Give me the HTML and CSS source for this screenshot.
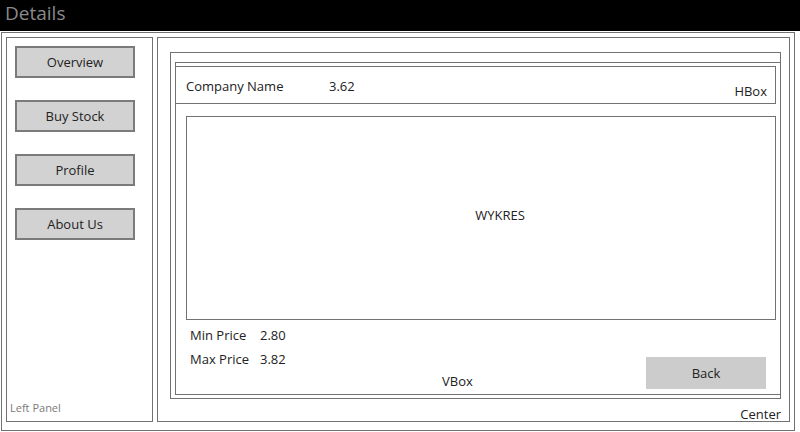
FILE: index.html
```html
<!DOCTYPE html>
<html lang="en">
<head>
<meta charset="utf-8">
<title>Details</title>
<link rel="stylesheet" href="styles.css">
</head>
<body>
<div class="titlebar">Details</div>
<div class="frame">
  <aside class="left-panel">
    <nav class="nav">
      <button class="nav-btn">Overview</button>
      <button class="nav-btn">Buy Stock</button>
      <button class="nav-btn">Profile</button>
      <button class="nav-btn">About Us</button>
    </nav>
    <span class="panel-label">Left Panel</span>
  </aside>
  <main class="center">
    <section class="box-a">
      <div class="vbox">
        <div class="hbox">
          <div class="hbox-row"><span class="company">Company Name</span><span>3.62</span></div>
          <span class="hbox-label">HBox</span>
        </div>
        <div class="chart"><span>WYKRES</span></div>
        <div class="bottom">
          <div class="prices">
            <div class="price-row"><span class="price-name">Min Price</span><span>2.80</span></div>
            <div class="price-row"><span class="price-name">Max Price</span><span>3.82</span></div>
          </div>
          <span class="vbox-label">VBox</span>
          <button class="back-btn">Back</button>
        </div>
      </div>
    </section>
    <span class="center-label">Center</span>
  </main>
</div>
</body>
</html>
```
FILE: styles.css
```css
* { box-sizing: border-box; }

body {
  margin: 0;
  width: 800px;
  height: 432px;
  overflow: hidden;
  background: #fff;
  color: #222;
  font-family: "Open Sans", "Noto Sans", sans-serif;
  font-size: 13px;
  line-height: 18px;
}

.titlebar {
  height: 31px;
  background: #000;
  color: #8a8a8a;
  font-size: 19px;
  line-height: 27px;
  padding-left: 5px;
}

.frame {
  margin: 1px 0 0 1px;
  width: 794px;
  height: 399px;
  border: 1px solid #727272;
  padding: 4px 4px 8px 4px;
  display: flex;
  gap: 4px;
}

.left-panel {
  width: 147px;
  border: 1px solid #727272;
  display: grid;
}
.left-panel > * { grid-area: 1 / 1; }

.nav {
  display: flex;
  flex-direction: column;
  align-items: flex-start;
  gap: 22px;
  padding: 8px;
}

.nav-btn {
  width: 120px;
  height: 32px;
  padding: 0;
  border: 2px solid #7b7b7b;
  background: #d2d2d2;
  color: #222;
  font: inherit;
}

.panel-label {
  justify-self: start;
  align-self: end;
  font-size: 11px;
  line-height: 14px;
  color: #7a7a7a;
  padding: 0 0 6px 3px;
}

.center {
  flex: 1;
  border: 1px solid #727272;
  display: grid;
}
.center > * { grid-area: 1 / 1; }

.box-a {
  margin: 14px 8px 22px 12px;
  border: 1px solid #727272;
  display: flex;
  flex-direction: column;
}

.vbox {
  flex: 1;
  margin: 9px -1px 3px 4px;
  border: 1px solid #727272;
  display: flex;
  flex-direction: column;
}

.hbox {
  margin: 3px 4px 0 -1px;
  height: 38px;
  border: 1px solid #727272;
  display: grid;
}
.hbox > * { grid-area: 1 / 1; }

.hbox-row {
  align-self: start;
  display: flex;
  padding: 10px 0 0 10px;
}

.company { width: 143px; }

.hbox-label {
  justify-self: end;
  align-self: end;
  padding: 0 8px 3px 0;
}

.chart {
  margin: 12px 4px 0 10px;
  height: 204px;
  border: 1px solid #727272;
  display: flex;
  align-items: center;
  justify-content: center;
  padding: 0 0 6px 38px;
}

.bottom {
  flex: 1;
  display: grid;
  grid-template-columns: 266px auto 1fr;
}

.prices {
  padding: 3px 0 0 14px;
  line-height: 24px;
}

.price-name {
  display: inline-block;
  width: 70px;
}

.vbox-label {
  align-self: end;
  padding-bottom: 4px;
}

.back-btn {
  justify-self: end;
  align-self: start;
  margin: 37px 14px 0 0;
  width: 120px;
  height: 32px;
  padding: 0;
  border: 0;
  background: #cccccc;
  color: #222;
  font: inherit;
}

.center-label {
  justify-self: end;
  align-self: end;
  line-height: 14px;
  padding-right: 8px;
}
```
